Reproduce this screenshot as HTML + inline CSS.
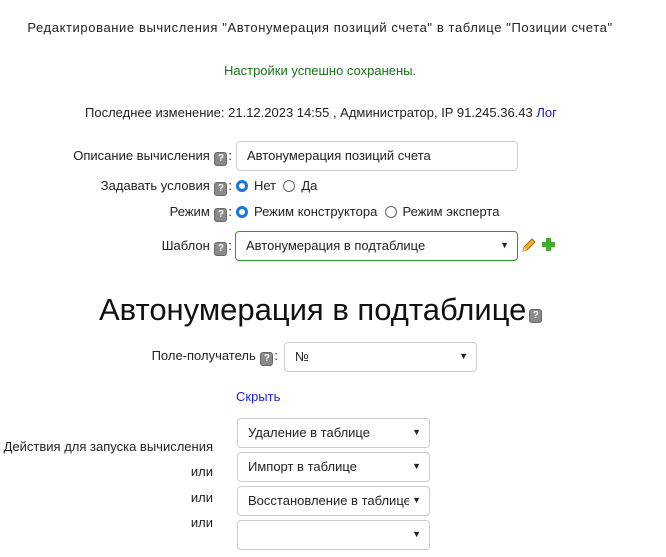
<!DOCTYPE html>
<html><head><meta charset="utf-8"><style>
body{margin:0;width:666px;height:557px;background:#fff;font-family:"Liberation Sans","DejaVu Sans",sans-serif;font-size:13px;color:#222;position:relative;overflow:hidden}
.a{position:absolute;white-space:nowrap}
.h{display:inline-block;width:13px;height:14px;background:#8a8a8a;border:1px solid #666;border-radius:3px;color:#fff;font-size:10px;font-weight:bold;text-align:center;line-height:12px;vertical-align:-1px;box-sizing:border-box;margin:0 1px}
.box{position:absolute;border:1px solid #ccc;border-radius:4px;box-sizing:border-box;background:#fff;padding-left:10px;line-height:27px}
.arr{position:absolute;right:8px;top:0;font-size:9px}
.r{display:inline-block;width:12px;height:12px;border:1px solid #666;border-radius:50%;box-sizing:border-box;vertical-align:-2px;margin-right:6px}
.r.on{border:3.5px solid #1a73e8}
.lr{text-align:right}
</style></head><body>
<div class="a" style="left:0;width:640px;text-align:center;top:20px;letter-spacing:0.6px">Редактирование вычисления "Автонумерация позиций счета" в таблице "Позиции счета"</div>
<div class="a" style="left:224px;top:63px;color:#197319">Настройки успешно сохранены.</div>
<div class="a" style="left:85px;top:105px">Последнее изменение: 21.12.2023 14:55 , Администратор, IP 91.245.36.43 <span style="color:#1a1acc">Лог</span></div>
<div class="a lr" style="right:434px;top:148px">Описание вычисления <span class="h">?</span>:</div>
<div class="box" style="left:236px;top:141px;width:282px;height:30px">Автонумерация позиций счета</div>
<div class="a lr" style="right:434px;top:178px">Задавать условия <span class="h">?</span>:</div>
<div class="a" style="left:236px;top:178px"><span class="r on"></span>Нет &nbsp;<span class="r"></span>Да</div>
<div class="a lr" style="right:434px;top:204px">Режим <span class="h">?</span>:</div>
<div class="a" style="left:236px;top:204px"><span class="r on"></span>Режим конструктора &nbsp;<span class="r"></span>Режим эксперта</div>
<div class="a lr" style="right:434px;top:238px">Шаблон <span class="h">?</span>:</div>
<div class="box" style="left:235px;top:231px;width:283px;height:30px;border-color:#2a9a2a">Автонумерация в подтаблице<span class="arr">▼</span></div>
<svg class="a" style="left:521px;top:237px" width="16" height="16" viewBox="0 0 16 16"><path d="M2 14 L3 10 L11 2 L14 5 L6 13 Z" fill="#f0b030" stroke="#a06a10"/><path d="M2 14 L3 10 L6 13 Z" fill="#f5d7a0"/></svg>
<svg class="a" style="left:541px;top:237px" width="15" height="15"><path d="M5 1h5v4h4v5h-4v4h-5v-4h-4v-5h4z" fill="#3fae2a"/></svg>
<div class="a" style="left:99px;top:292px;font-size:31px;color:#111">Автонумерация в подтаблице<span class="h" style="vertical-align:2px;margin-left:3px">?</span></div>
<div class="a lr" style="right:388px;top:348px">Поле-получатель <span class="h">?</span>:</div>
<div class="box" style="left:284px;top:342px;width:193px;height:30px">№<span class="arr">▼</span></div>
<div class="a" style="left:236px;top:389px;color:#1a1aff">Скрыть</div>
<div class="a lr" style="right:453px;top:439px">Действия для запуска вычисления</div>
<div class="a lr" style="right:453px;top:464px">или</div>
<div class="a lr" style="right:453px;top:490px">или</div>
<div class="a lr" style="right:453px;top:515px">или</div>
<div class="box" style="left:237px;top:418px;width:193px;height:30px">Удаление в таблице<span class="arr">▼</span></div>
<div class="box" style="left:237px;top:452px;width:193px;height:30px">Импорт в таблице<span class="arr">▼</span></div>
<div class="box" style="left:237px;top:486px;width:193px;height:30px;overflow:hidden">Восстановление в таблице<span class="arr" style="background:#fff;padding-left:3px">▼</span></div>
<div class="box" style="left:237px;top:520px;width:193px;height:30px"><span class="arr">▼</span></div>
</body></html>
